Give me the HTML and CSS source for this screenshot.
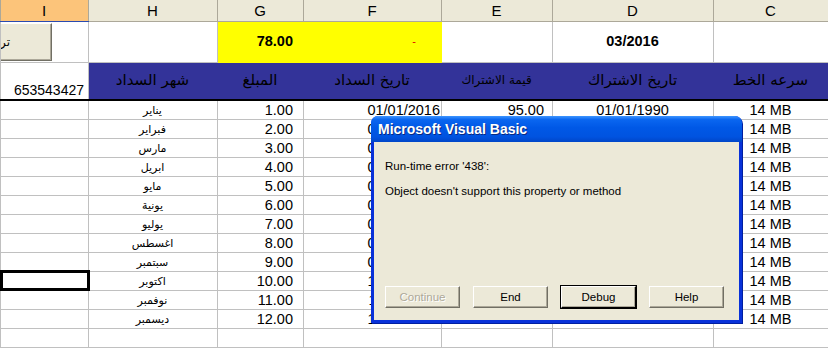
FILE: index.html
```html
<!DOCTYPE html>
<html lang="ar">
<head>
  <meta charset="UTF-8">
  <title>Sheet - Run-time error</title>
  <link rel="stylesheet" href="styles.css">
</head>
<body>

  <table class="sheet">
    <colgroup>
      <col class="w-i"><col class="w-h"><col class="w-g"><col class="w-f"><col class="w-e"><col class="w-d"><col class="w-c">
    </colgroup>
    <tr class="col-head">
      <td class="sel">I</td><td>H</td><td>G</td><td>F</td><td>E</td><td>D</td><td>C</td>
    </tr>
    <tr class="top-row">
      <td class="btn-cell"><div class="sheet-btn">تر</div></td>
      <td></td>
      <td class="yellow amount bold">78.00</td>
      <td class="yellow dash">-</td>
      <td></td>
      <td class="center bold">03/2016</td>
      <td></td>
    </tr>
    <tr class="band">
      <td class="phone">653543427</td>
      <td class="blue">شهر السداد</td>
      <td class="blue">المبلغ</td>
      <td class="blue">تاريخ السداد</td>
      <td class="blue small">قيمة الاشتراك</td>
      <td class="blue">تاريخ الاشتراك</td>
      <td class="blue">سرعه الخط</td>
    </tr>
    <tr class="data"><td></td><td class="month">يناير</td><td class="amount">1.00</td><td class="num">01/01/2016</td><td class="fee">95.00</td><td class="center">01/01/1990</td><td class="center">14 MB</td></tr>
    <tr class="data"><td></td><td class="month">فبراير</td><td class="amount">2.00</td><td class="num">02/01/2016</td><td class="fee">95.00</td><td class="center">01/01/1990</td><td class="center">14 MB</td></tr>
    <tr class="data"><td></td><td class="month">مارس</td><td class="amount">3.00</td><td class="num">03/01/2016</td><td class="fee">95.00</td><td class="center">01/01/1990</td><td class="center">14 MB</td></tr>
    <tr class="data"><td></td><td class="month">ابريل</td><td class="amount">4.00</td><td class="num">04/01/2016</td><td class="fee">95.00</td><td class="center">01/01/1990</td><td class="center">14 MB</td></tr>
    <tr class="data"><td></td><td class="month">مايو</td><td class="amount">5.00</td><td class="num">05/01/2016</td><td class="fee">95.00</td><td class="center">01/01/1990</td><td class="center">14 MB</td></tr>
    <tr class="data"><td></td><td class="month">يونية</td><td class="amount">6.00</td><td class="num">06/01/2016</td><td class="fee">95.00</td><td class="center">01/01/1990</td><td class="center">14 MB</td></tr>
    <tr class="data"><td></td><td class="month">يوليو</td><td class="amount">7.00</td><td class="num">07/01/2016</td><td class="fee">95.00</td><td class="center">01/01/1990</td><td class="center">14 MB</td></tr>
    <tr class="data"><td></td><td class="month">اغسطس</td><td class="amount">8.00</td><td class="num">08/01/2016</td><td class="fee">95.00</td><td class="center">01/01/1990</td><td class="center">14 MB</td></tr>
    <tr class="data"><td></td><td class="month">سبتمبر</td><td class="amount">9.00</td><td class="num">09/01/2016</td><td class="fee">95.00</td><td class="center">01/01/1990</td><td class="center">14 MB</td></tr>
    <tr class="data"><td class="active"></td><td class="month">اكتوبر</td><td class="amount">10.00</td><td class="num">10/01/2016</td><td class="fee">95.00</td><td class="center">01/01/1990</td><td class="center">14 MB</td></tr>
    <tr class="data"><td></td><td class="month">نوفمبر</td><td class="amount">11.00</td><td class="num">11/01/2016</td><td class="fee">95.00</td><td class="center">01/01/1990</td><td class="center">14 MB</td></tr>
    <tr class="data"><td></td><td class="month">ديسمبر</td><td class="amount">12.00</td><td class="num">12/01/2016</td><td class="fee">95.00</td><td class="center">01/01/1990</td><td class="center">14 MB</td></tr>
    <tr class="data"><td></td><td></td><td></td><td></td><td></td><td></td><td></td></tr>
  </table>

  <div class="vb-dialog">
    <div class="vb-title">Microsoft Visual Basic</div>
    <div class="vb-body">
      <div class="vb-msg">Run-time error '438':</div>
      <div class="vb-msg">Object doesn't support this property or method</div>
      <div class="vb-buttons">
        <button class="vb-btn" disabled>Continue</button>
        <button class="vb-btn">End</button>
        <button class="vb-btn default">Debug</button>
        <button class="vb-btn">Help</button>
      </div>
    </div>
  </div>

</body>
</html>
```

FILE: styles.css
```css
* {
  box-sizing: border-box;
}

body {
  margin: 0;
  width: 828px;
  height: 349px;
  overflow: hidden;
  position: relative;
  background-color: #fff;
  font-family: 'Liberation Sans', Arial, sans-serif;
}

.sheet {
  border-collapse: collapse;
  table-layout: fixed;
  width: 828px;
}

.w-i { width: 88px; }
.w-h { width: 129px; }
.w-g { width: 86px; }
.w-f { width: 138px; }
.w-e { width: 111px; }
.w-d { width: 161px; }
.w-c { width: 115px; }

.sheet td {
  border: 1px solid #c0c0c0;
  padding: 0 4px 0 3px;
  overflow: hidden;
  white-space: nowrap;
  font-size: 14.5px;
  line-height: 17px;
  vertical-align: bottom;
  color: #000;
}

.col-head td {
  height: 21px;
  background-color: #ece9d8;
  border-color: #aca899;
  text-align: center;
  vertical-align: middle;
  font-size: 15px;
  border-top: none;
}

.col-head td.sel {
  background-color: #fcc47a;
  border-bottom: 1px solid #2a4ab0;
}

.top-row td {
  height: 41px;
  vertical-align: middle;
}

.bold {
  font-weight: bold;
  font-size: 14px;
}

.yellow {
  background-color: #ffff00;
}

.sheet td.yellow {
  border-color: #ffff00;
}

.sheet td.dash {
  color: #e00000;
  text-align: right;
  padding-right: 25px;
  font-size: 11px;
}

.sheet td.btn-cell {
  padding: 0;
  vertical-align: top;
}

.sheet-btn {
  width: 94px;
  height: 38px;
  margin-left: -43px;
  margin-top: 1px;
  background-color: #ece9d8;
  border: 1px solid #fff;
  border-right-color: #716f64;
  border-bottom-color: #716f64;
  box-shadow: inset -1px -1px 0 #aca899;
  text-align: center;
  line-height: 36px;
  font-family: 'DejaVu Sans', sans-serif;
  font-size: 12px;
}

.band td {
  height: 38px;
  border-bottom: 2px solid #000;
}

.band td.blue {
  background-color: #333399;
  border-color: #333399;
  border-bottom: 2px solid #000;
  text-align: center;
  vertical-align: middle;
  font-family: 'DejaVu Sans', sans-serif;
  font-size: 15px;
  color: #000;
}

.band td.blue.small {
  font-size: 12px;
}

.sheet td.phone {
  text-align: right;
  padding-right: 4px;
  font-size: 14px;
}

.data td {
  height: 19px;
}

.num {
  text-align: right;
}

.sheet td.amount {
  text-align: right;
  padding-right: 10px;
}

.sheet td.fee {
  text-align: right;
  padding-right: 8px;
}

.sheet td.num {
  padding-right: 1px;
}

.center {
  text-align: center;
}

.sheet td.month {
  text-align: center;
  font-family: 'DejaVu Sans', sans-serif;
  font-size: 11px;
}

.sheet td.active {
  outline: 3px solid #000;
  outline-offset: -2px;
}

/* VB error box */
.vb-dialog {
  position: absolute;
  left: 371px;
  top: 116px;
  width: 371px;
  height: 207px;
  display: flex;
  flex-direction: column;
  background-color: #0831d9;
  border-radius: 7px 7px 0 0;
  padding: 0 3px 3px 3px;
  box-shadow: 1px 1px 0 #001ea0;
}

.vb-title {
  height: 26px;
  margin: 0 -3px;
  padding: 1px 0 0 7px;
  border-radius: 7px 7px 0 0;
  background: linear-gradient(to bottom, #3d95ff 0%, #0a66f0 14%, #0058e6 45%, #0053e0 80%, #0046c8 100%);
  color: #fff;
  font-weight: bold;
  font-size: 14px;
  line-height: 25px;
  text-shadow: 1px 1px 0 #0a2a80;
}

.vb-body {
  flex: 1;
  display: flex;
  flex-direction: column;
  background-color: #ece9d8;
  padding: 17px 11px 12px 11px;
}

.vb-msg {
  font-size: 11.5px;
  line-height: 14px;
  margin-bottom: 11px;
  color: #000;
}

.vb-buttons {
  margin-top: auto;
  display: flex;
  gap: 13px;
}

.vb-btn {
  width: 75px;
  height: 22px;
  padding: 0;
  background-color: #ece9d8;
  border: 1px solid #fff;
  border-right-color: #716f64;
  border-bottom-color: #716f64;
  box-shadow: inset -1px -1px 0 #aca899;
  font-family: 'Liberation Sans', Arial, sans-serif;
  font-size: 11.5px;
  color: #000;
}

.vb-btn:disabled {
  color: #aca899;
  text-shadow: 1px 1px 0 #fff;
}

.vb-btn.default {
  outline: 1px solid #000;
  outline-offset: 0;
  border-right-color: #000;
  border-bottom-color: #000;
}
```
